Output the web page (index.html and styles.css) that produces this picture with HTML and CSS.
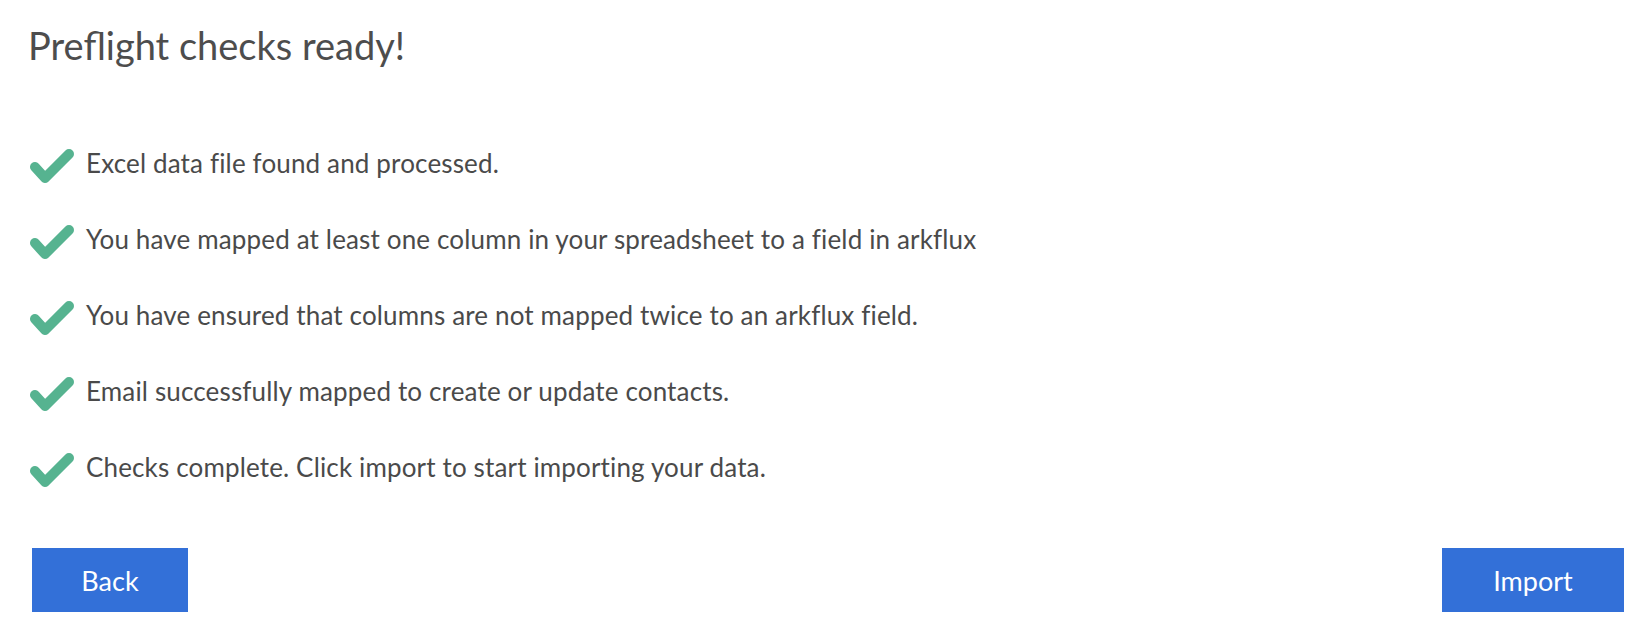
FILE: index.html
```html
<!DOCTYPE html>
<html lang="en">
<head>
<meta charset="utf-8">
<title>Preflight checks</title>
<link rel="stylesheet" href="styles.css">
</head>
<body>
<div class="page">
  <h1 class="title">Preflight checks ready!</h1>
  <ul class="checks">
    <li class="check-row">
      <svg class="check-icon" viewBox="0 0 46 37" aria-hidden="true"><polyline points="6,20 16,31 40,7"/></svg>
      <span class="check-text">Excel data file found and processed.</span>
    </li>
    <li class="check-row">
      <svg class="check-icon" viewBox="0 0 46 37" aria-hidden="true"><polyline points="6,20 16,31 40,7"/></svg>
      <span class="check-text">You have mapped at least one column in your spreadsheet to a field in arkflux</span>
    </li>
    <li class="check-row">
      <svg class="check-icon" viewBox="0 0 46 37" aria-hidden="true"><polyline points="6,20 16,31 40,7"/></svg>
      <span class="check-text">You have ensured that columns are not mapped twice to an arkflux field.</span>
    </li>
    <li class="check-row">
      <svg class="check-icon" viewBox="0 0 46 37" aria-hidden="true"><polyline points="6,20 16,31 40,7"/></svg>
      <span class="check-text">Email successfully mapped to create or update contacts.</span>
    </li>
    <li class="check-row">
      <svg class="check-icon" viewBox="0 0 46 37" aria-hidden="true"><polyline points="6,20 16,31 40,7"/></svg>
      <span class="check-text">Checks complete. Click import to start importing your data.</span>
    </li>
  </ul>
  <div class="actions">
    <button class="btn btn-back">Back</button>
    <button class="btn btn-import">Import</button>
  </div>
</div>
</body>
</html>
```

FILE: styles.css
```css
html, body {
  margin: 0;
  padding: 0;
  background: #ffffff;
}

body {
  font-family: Lato, "Liberation Sans", sans-serif;
  color: #4a4a4a;
}

.page {
  padding: 23px 16px 0 28px;
}

.title {
  margin: 0;
  font-size: 38px;
  font-weight: 400;
  line-height: 45px;
  color: #4d4d4d;
}

.checks {
  list-style: none;
  margin: 79px 0 0 0;
  padding: 0;
  display: flex;
  flex-direction: column;
  gap: 39px;
}

.check-row {
  display: flex;
  align-items: flex-start;
  gap: 11px;
  height: 37px;
}

.check-icon {
  width: 46px;
  height: 37px;
  flex: none;
  margin-left: 1px;
}

.check-icon polyline {
  fill: none;
  stroke: #56b390;
  stroke-width: 10;
  stroke-linecap: round;
  stroke-linejoin: round;
}

.check-text {
  font-size: 26px;
  line-height: 31px;
  letter-spacing: 0.15px;
  margin-top: 1px;
}

.actions {
  display: flex;
  justify-content: space-between;
  margin-top: 60px;
  padding-left: 4px;
}

.btn {
  height: 64px;
  border: none;
  border-radius: 0;
  background: #3370d8;
  color: #ffffff;
  font-family: Lato, "Liberation Sans", sans-serif;
  font-size: 27px;
  padding: 0;
  cursor: pointer;
}

.btn-back {
  width: 156px;
}

.btn-import {
  width: 182px;
}
```
